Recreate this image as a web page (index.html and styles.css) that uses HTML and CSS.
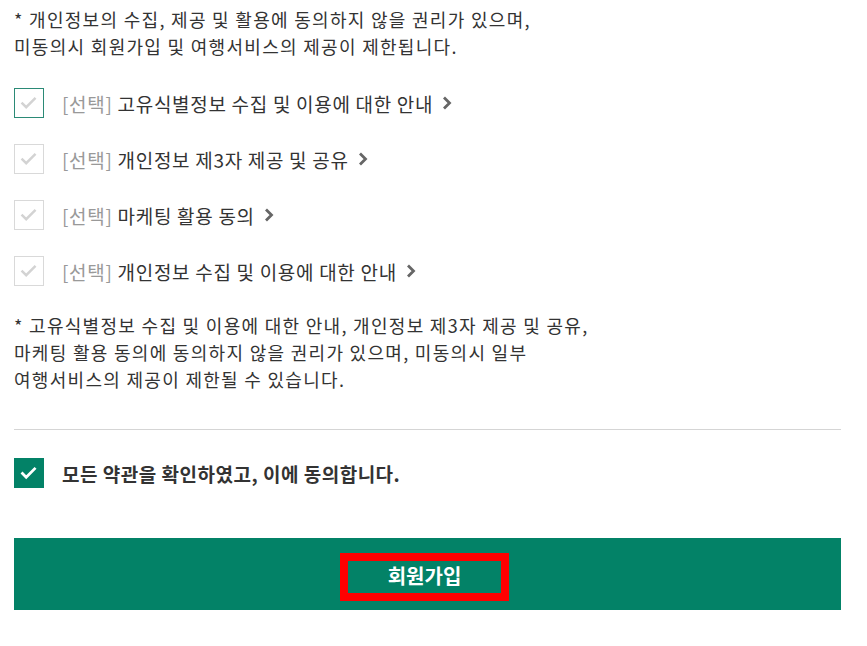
FILE: index.html
```html
<!DOCTYPE html>
<html>
<head>
  <title>회원가입 약관 동의</title>
  <link rel="stylesheet" href="styles.css">
</head>
<body>
  <div class="terms">
    <p class="notice">* 개인정보의 수집, 제공 및 활용에 동의하지 않을 권리가 있으며,<br>미동의시 회원가입 및 여행서비스의 제공이 제한됩니다.</p>

    <ul class="agree-list">
      <li class="agree-item focus">
        <span class="check"><svg viewBox="0 0 30 30"><path d="M7 14.5l5 5 10-10"/></svg></span>
        <span class="label"><em>[선택]</em> 고유식별정보 수집 및 이용에 대한 안내</span>
        <svg class="arrow" viewBox="0 0 10 14"><path d="M2 1.5l5.5 5.5-5.5 5.5"/></svg>
      </li>
      <li class="agree-item">
        <span class="check"><svg viewBox="0 0 30 30"><path d="M7 14.5l5 5 10-10"/></svg></span>
        <span class="label"><em>[선택]</em> 개인정보 제3자 제공 및 공유</span>
        <svg class="arrow" viewBox="0 0 10 14"><path d="M2 1.5l5.5 5.5-5.5 5.5"/></svg>
      </li>
      <li class="agree-item">
        <span class="check"><svg viewBox="0 0 30 30"><path d="M7 14.5l5 5 10-10"/></svg></span>
        <span class="label"><em>[선택]</em> 마케팅 활용 동의</span>
        <svg class="arrow" viewBox="0 0 10 14"><path d="M2 1.5l5.5 5.5-5.5 5.5"/></svg>
      </li>
      <li class="agree-item">
        <span class="check"><svg viewBox="0 0 30 30"><path d="M7 14.5l5 5 10-10"/></svg></span>
        <span class="label"><em>[선택]</em> 개인정보 수집 및 이용에 대한 안내</span>
        <svg class="arrow" viewBox="0 0 10 14"><path d="M2 1.5l5.5 5.5-5.5 5.5"/></svg>
      </li>
    </ul>

    <p class="notice">* 고유식별정보 수집 및 이용에 대한 안내, 개인정보 제3자 제공 및 공유,<br>마케팅 활용 동의에 동의하지 않을 권리가 있으며, 미동의시 일부<br>여행서비스의 제공이 제한될 수 있습니다.</p>

    <div class="all-agree">
      <span class="check checked"><svg viewBox="0 0 30 30"><path d="M7 14.5l5 5 10-10"/></svg></span>
      <span class="all-label">모든 약관을 확인하였고, 이에 동의합니다.</span>
    </div>

    <button class="join-btn"><span class="join-text">회원가입</span></button>
  </div>
</body>
</html>
```

FILE: styles.css
```css
body {
  margin: 0;
  padding: 0;
  font-family: "Noto Sans CJK KR", "Noto Sans", sans-serif;
  color: #333;
  background: #fff;
}
.terms {
  padding: 6px 26px 0 14px;
}
.notice {
  margin: 0;
  font-size: 18px;
  letter-spacing: 1.3px;
  line-height: 27px;
  color: #333;
}
.agree-list {
  list-style: none;
  margin: 28px 0 0;
  padding: 0;
}
.agree-item {
  display: flex;
  align-items: center;
  height: 30px;
  margin-bottom: 26px;
}
.check {
  box-sizing: border-box;
  width: 30px;
  height: 30px;
  border: 1px solid #d9d9d9;
  background: #fff;
  flex-shrink: 0;
}
.check svg {
  display: block;
  width: 28px;
  height: 28px;
}
.check path {
  fill: none;
  stroke: #d3d3d3;
  stroke-width: 2.6;
}
.agree-item.focus .check {
  border-color: #2b8a76;
}
.label {
  margin-left: 18px;
  font-size: 19px;
  letter-spacing: 0.7px;
  color: #333;
}
.label em {
  font-style: normal;
  color: #999;
}
.arrow {
  width: 10px;
  height: 14px;
  margin-left: 9px;
}
.arrow path {
  fill: none;
  stroke: #666;
  stroke-width: 2.8;
}
.all-agree {
  display: flex;
  align-items: center;
  border-top: 1px solid #d5d5d5;
  margin-top: 36px;
  padding-top: 28px;
}
.check.checked {
  background: #038267;
  border-color: #038267;
}
.check.checked path {
  stroke: #fff;
  stroke-width: 3;
}
.all-label {
  margin-left: 18px;
  font-size: 19px;
  letter-spacing: 0.5px;
  font-weight: bold;
  color: #333;
}
.join-btn {
  display: flex;
  justify-content: center;
  align-items: center;
  width: 100%;
  height: 72px;
  margin-top: 50px;
  border: none;
  background: #038267;
  color: #fff;
  font-family: inherit;
  font-size: 20px;
  font-weight: bold;
  cursor: pointer;
}
.join-text {
  box-sizing: border-box;
  width: 169px;
  height: 48px;
  margin: 6px 6px 0 0;
  border: 8px solid #ff0000;
  line-height: 30px;
  text-align: center;
}
```
